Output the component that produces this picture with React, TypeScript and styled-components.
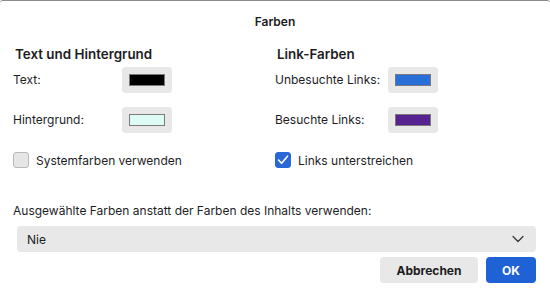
import React from "react"
import styled, { createGlobalStyle } from "styled-components"

const GlobalStyle = createGlobalStyle`
  html, body {
    margin: 0;
    padding: 0;
    background: #ffffff;
  }
  body {
    font-family: Inter, "Noto Sans", "Liberation Sans", sans-serif;
    color: #1d1d1f;
    -webkit-font-smoothing: antialiased;
  }
`

// STYLES
const Dialog = styled.div`
  width: 550px;
  height: 298px;
  box-sizing: border-box;
  border-top: 1px solid #8c8c8c;
  border-radius: 3px 3px 0 0;
  background: #ffffff;
  display: flex;
  flex-direction: column;
`

const Title = styled.div`
  font-size: 12px;
  font-weight: 600;
  text-align: center;
  height: 16px;
  line-height: 16px;
  margin-top: 13px;
`

const Columns = styled.div`
  display: grid;
  grid-template-columns: 262px 262px;
  padding-left: 13px;
  margin-top: 15px;
`

const Column = styled.div`
  display: flex;
  flex-direction: column;
`

const Heading = styled.h2`
  margin: 0 0 4px 2px;
  font-size: 13.4px;
  font-weight: 600;
  line-height: 18px;
`

const ColorRow = styled.div`
  display: flex;
  align-items: center;
  height: 26px;
  margin-bottom: 14px;
`

const Label = styled.span<{ $width: number }>`
  width: ${(p) => p.$width}px;
  font-size: 12px;
  line-height: 16px;
  white-space: nowrap;
`

const SwatchButton = styled.button`
  width: 50px;
  height: 26px;
  border: none;
  border-radius: 4px;
  background: #e8e8e8;
  padding: 0;
  display: flex;
  align-items: center;
  justify-content: center;
`

const Swatch = styled.span<{ $color: string }>`
  width: 36px;
  height: 12px;
  box-sizing: border-box;
  border: 1px solid #7a7a7a;
  background: ${(p) => p.$color};
`

const CheckRow = styled.label`
  display: flex;
  align-items: center;
  gap: 7px;
  height: 16px;
  margin-top: 5px;
  font-size: 12px;
`

const Box = styled.span<{ $checked?: boolean }>`
  width: 16px;
  height: 16px;
  box-sizing: border-box;
  border-radius: 3px;
  display: flex;
  align-items: center;
  justify-content: center;
  background: ${(p) => (p.$checked ? "#2a68d8" : "#e6e6e6")};
  border: 1px solid ${(p) => (p.$checked ? "#2a68d8" : "#b9b9b9")};
`

const Footer = styled.div`
  display: flex;
  flex-direction: column;
  padding: 0 14px 0 13px;
  margin-top: 35px;
`

const Prompt = styled.div`
  font-size: 12px;
  line-height: 16px;
`

const Select = styled.div`
  margin: 7px 0 0 4px;
  height: 26px;
  border-radius: 4px;
  background: #e8e8e8;
  display: flex;
  align-items: center;
  justify-content: space-between;
  padding: 0 12px 0 10px;
  font-size: 12px;
`

const Actions = styled.div`
  display: flex;
  justify-content: flex-end;
  gap: 8px;
  margin-top: 5px;
`

const Button = styled.button<{ $primary?: boolean }>`
  height: 26px;
  border: none;
  border-radius: 4px;
  padding: 0;
  width: ${(p) => (p.$primary ? "50px" : "98px")};
  font-family: inherit;
  font-size: 12px;
  font-weight: 700;
  color: ${(p) => (p.$primary ? "#ffffff" : "#1d1d1f")};
  background: ${(p) => (p.$primary ? "#1f62d6" : "#e8e8e8")};
`

const rowsLeft = [
  { label: "Text:", color: "#000000" },
  { label: "Hintergrund:", color: "#dcfcf5" },
]

const rowsRight = [
  { label: "Unbesuchte Links:", color: "#2a6fd8" },
  { label: "Besuchte Links:", color: "#55228f" },
]

const Chevron = () => (
  <svg width="12" height="8" viewBox="0 0 12 8" fill="none">
    <path d="M1 1.5 L6 6.5 L11 1.5" stroke="#333" strokeWidth="1.2" strokeLinecap="round" strokeLinejoin="round" />
  </svg>
)

const Check = () => (
  <svg width="12" height="10" viewBox="0 0 12 10" fill="none">
    <path d="M1.5 5 L4.6 8.3 L10.5 1.2" stroke="#fff" strokeWidth="1.6" strokeLinecap="round" strokeLinejoin="round" />
  </svg>
)

const App = () => {
  return (
    <>
      <GlobalStyle />
      <Dialog>
        <Title>Farben</Title>
        <Columns>
          <Column>
            <Heading>Text und Hintergrund</Heading>
            {rowsLeft.map((r) => (
              <ColorRow key={r.label}>
                <Label $width={109}>{r.label}</Label>
                <SwatchButton>
                  <Swatch $color={r.color} />
                </SwatchButton>
              </ColorRow>
            ))}
            <CheckRow>
              <Box />
              Systemfarben verwenden
            </CheckRow>
          </Column>
          <Column>
            <Heading>Link-Farben</Heading>
            {rowsRight.map((r) => (
              <ColorRow key={r.label}>
                <Label $width={113}>{r.label}</Label>
                <SwatchButton>
                  <Swatch $color={r.color} />
                </SwatchButton>
              </ColorRow>
            ))}
            <CheckRow>
              <Box $checked>
                <Check />
              </Box>
              Links unterstreichen
            </CheckRow>
          </Column>
        </Columns>
        <Footer>
          <Prompt>Ausgewählte Farben anstatt der Farben des Inhalts verwenden:</Prompt>
          <Select>
            <span>Nie</span>
            <Chevron />
          </Select>
          <Actions>
            <Button>Abbrechen</Button>
            <Button $primary>OK</Button>
          </Actions>
        </Footer>
      </Dialog>
    </>
  )
}

export default App
